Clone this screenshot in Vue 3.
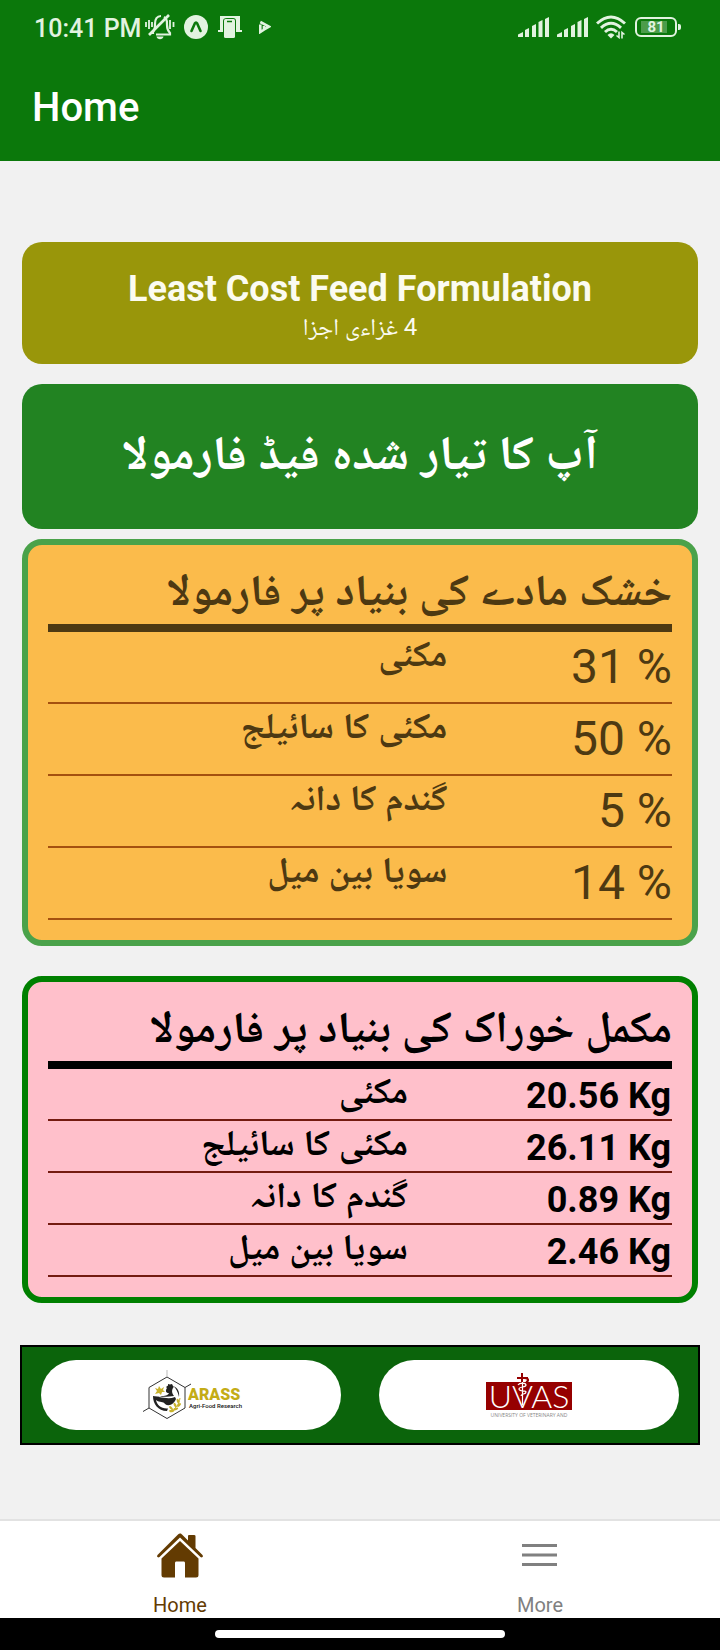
<script setup>
const dryMatter = [
  { name: 'مکئی', amount: '31 %' },
  { name: 'مکئی کا سائیلج', amount: '50 %' },
  { name: 'گندم کا دانہ', amount: '5 %' },
  { name: 'سویا بین میل', amount: '14 %' },
]
const asFed = [
  { name: 'مکئی', amount: '20.56 Kg' },
  { name: 'مکئی کا سائیلج', amount: '26.11 Kg' },
  { name: 'گندم کا دانہ', amount: '0.89 Kg' },
  { name: 'سویا بین میل', amount: '2.46 Kg' },
]
</script>

<template>
  <div class="screen">
    <header class="top">
      <div class="status">
        <div class="group">
          <span class="clock">10:41 PM</span>
          <svg class="bell" width="30" height="28" viewBox="0 0 30 28" fill="none" stroke="currentColor" stroke-width="2.200">
            <path d="M8 21 V19 C10 17 10 15 10 11 C10 6 12 3 16 3 M19 4 C22 6 22 8 22 12 C22 16 23 18 25 20 V21.500 H11" />
            <path d="M24 2 L4 22" stroke-width="2.600" />
            <path d="M1 9 V14 M4 7 V16 M7 9 V14 M25 7 V16 M28.500 9 V14 M22 8 V13" stroke-width="1.800" />
            <path d="M11.500 23.500 H18.500 C18 27 12 27 11.500 23.500Z" fill="currentColor" stroke="none" />
          </svg>
          <svg class="expo" width="24" height="24" viewBox="0 0 24 24">
            <circle cx="12" cy="12" r="12" fill="currentColor" />
            <path d="M7.500 16 L10.800 8.500 Q12 6.500 13.200 8.500 L16.500 16" fill="none" stroke="#0b780b" stroke-width="2.600" stroke-linecap="round" />
          </svg>
          <svg class="cast" width="24" height="22" viewBox="0 0 24 22">
            <path d="M2 0 H22 V14 H24 V16 H18 V5 Q18 2 15 2 H9 Q5 2 5 5 V16 H0 V14 H2 Z" fill="currentColor" />
            <rect x="6" y="3" width="11" height="19" rx="1.500" fill="currentColor" />
            <path d="M9 5.500 H14" stroke="#0b780b" stroke-width="1.500" />
          </svg>
          <svg class="play" width="12" height="14" viewBox="0 0 12 14" fill="none" stroke="currentColor" stroke-width="2.600">
            <path d="M1.300 2 L10 6.700 L5 9.500 V6 M1.300 4.500 V12 L6 9" />
          </svg>
        </div>
        <div class="group">
          <svg v-for="n in 2" :key="n" class="signal" width="31" height="20" viewBox="0 0 31 20" fill="currentColor">
            <path d="M0 20 V17.500 L5 15 V20Z M7 20 V13 L11 11 V20Z M14 20 V9 L18 7 V20Z M20.500 20 V5 L24.500 3 V20Z M27 20 V2 L31 0 V20Z" />
          </svg>
          <svg class="wifi" width="30" height="24" viewBox="0 0 30 24" fill="none" stroke="currentColor" stroke-width="3">
            <path d="M1 8.500 Q15 -4.500 29 8.500" />
            <path d="M5 12.800 Q15 3.800 25 12.800" />
            <path d="M9 17 Q15 11.500 21 17" />
            <path d="M11.500 20 Q15 16.500 18.500 20 L15 23.500Z" fill="currentColor" stroke="none" />
            <path d="M23 16.500 V22.500 L20.500 20.500 M26 23.500 V17.500 L28.500 19.500" stroke-width="1.600" />
          </svg>
          <span class="battery"><span class="cell">81</span></span>
        </div>
      </div>
      <h1 class="title">Home</h1>
    </header>

    <main class="content">
      <section class="card olive">
        <h2>Least Cost Feed Formulation</h2>
        <p dir="rtl">4 غزاءی اجزا</p>
      </section>

      <section class="card banner" dir="rtl">
        <h2>آپ کا تیار شدہ فیڈ فارمولا</h2>
      </section>

      <section class="card panel dry" dir="rtl">
        <h3>خشک مادے کی بنیاد پر فارمولا</h3>
        <table>
          <tbody>
            <tr v-for="row in dryMatter" :key="row.name">
              <td class="amount"><bdi dir="ltr">{{ row.amount }}</bdi></td>
              <th scope="row">{{ row.name }}</th>
            </tr>
          </tbody>
        </table>
      </section>

      <section class="card panel fed" dir="rtl">
        <h3>مکمل خوراک کی بنیاد پر فارمولا</h3>
        <table>
          <tbody>
            <tr v-for="row in asFed" :key="row.name">
              <td class="amount"><bdi dir="ltr">{{ row.amount }}</bdi></td>
              <th scope="row">{{ row.name }}</th>
            </tr>
          </tbody>
        </table>
      </section>

      <section class="sponsors">
        <div class="pill">
          <svg width="104" height="50" viewBox="-4 0 104 50" role="img" aria-label="ARASS Agri-Food Research">
            <g fill="none" stroke="#333" stroke-width="1">
              <path d="M24 7 L42 17.500 V38 L24 48.500 L6 38 V17.500Z" />
              <path d="M42 17.500 L48 14 M6 38 L0 41.500" />
              <path d="M24 0 V7" stroke="#bbb" />
            </g>
            <path d="M10 26 C10 34 15 41 24 41 L25 38.500 C18 39 14 35 13 30 C17 33 20 31 22 34 C26 37 31 34 33 29 L32 27 C27 29 22 28 16 27 C20 25 24 27 26 23 C23 23 22 21 24 18 L23 17 L25 15.500 L25 14 L27 14.500 L29 14 L30 16 C33 18 35 22 36 27 C37 22 34 17 31 16.500 C29 19 28 22 31 26 C26 27 14 27 10 26Z" fill="#222" />
            <path d="M12 18 L15 19 L16 16 L18 19 L21 17 L20 20 L22 22 L19 22 L18 25 L16 23 L12 24 L14 21Z" fill="#c9b32c" />
            <path d="M26 41 C32 40 36 35 37 28" fill="none" stroke="#c9b32c" stroke-width="1" />
            <g fill="#c9b32c">
              <ellipse cx="35" cy="31" rx="1.200" ry="2.400" transform="rotate(-20 35 31)" />
              <ellipse cx="32" cy="35" rx="1.200" ry="2.400" transform="rotate(-25 32 35)" />
              <ellipse cx="28" cy="38" rx="1.200" ry="2.400" transform="rotate(-45 28 38)" />
              <ellipse cx="36" cy="35" rx="1.200" ry="2.400" transform="rotate(50 36 35)" />
              <ellipse cx="33" cy="39" rx="1.200" ry="2.400" transform="rotate(65 33 39)" />
              <ellipse cx="29" cy="41" rx="1.200" ry="2.400" transform="rotate(80 29 41)" />
            </g>
            <text x="45" y="30" class="arass">ARASS</text>
            <text x="46" y="38" class="agri">Agri-Food Research</text>
          </svg>
        </div>
        <div class="pill">
          <svg width="90" height="50" viewBox="-2 0 90 50" role="img" aria-label="UVAS University of Veterinary and">
            <rect x="0" y="12" width="86" height="28" fill="#960000" />
            <path d="M36 3 V12 M31 8 H42 M38 8 C43 8 43 11 40 12" fill="none" stroke="#960000" stroke-width="2" />
            <text x="43" y="38" class="uvas">UVAS</text>
            <path d="M36.500 12 V35 M32 15 C34 12 40 13 40 15 C40 18 33 16 33 19 C33 22 40 20 40 22 C40 25 35 23 35 26" fill="none" stroke="#fff" stroke-width="1.200" />
            <text x="43" y="47" class="univ">UNIVERSITY OF VETERINARY AND</text>
          </svg>
        </div>
      </section>
    </main>

    <nav class="tabs">
      <a class="tab active" href="#home">
        <svg width="48" height="46" viewBox="0 0 48 46" fill="currentColor">
          <path d="M24 0.500 C25 0.500 25.500 1 26 1.500 L32 7.500 V3 Q32 2 33 2 H38 Q39.500 2 39.500 3 V15 L46.500 22 Q47.500 23.500 46.500 24 Q45.500 24.800 44.500 24 L24 4.500 L3.500 24 Q2.500 24.800 1.500 24 Q0.500 23.500 1.500 22 L22 1.500 Q23 0.500 24 0.500Z" />
          <path d="M24 8 L42.500 25.500 V42 Q42.500 44.500 40 44.500 H29 V30 Q29 28.500 28 28.500 H20 Q19 28.500 19 30 V44.500 H8 Q5.500 44.500 5.500 42 V25.500Z" />
        </svg>
        <span>Home</span>
      </a>
      <a class="tab" href="#more">
        <svg width="36" height="46" viewBox="0 0 36 46" fill="currentColor">
          <path d="M0 11 H35 V14 H0Z M0 20.500 H35 V23.500 H0Z M0 30 H35 V33 H0Z" />
        </svg>
        <span>More</span>
      </a>
    </nav>
    <div class="gesture"><span></span></div>
  </div>
</template>

<style>
body {
  margin: 0;
  background: #f1f1f1;
}
</style>

<style scoped>
.screen {
  display: flex;
  flex-direction: column;
  min-height: 100vh;
  font-family: Roboto, "Noto Naskh Arabic", "Noto Sans Arabic", "DejaVu Sans", sans-serif;
  background: #f1f1f1;
}
h1, h2, h3, p {
  margin: 0;
}
.top {
  height: 161px;
  background: #0b780b;
  color: #fff;
}
.status {
  display: flex;
  justify-content: space-between;
  height: 54px;
  padding: 0 38px 0 34px;
  color: #e2f3e0;
}
.group {
  display: flex;
  align-items: center;
}
.clock {
  font-size: 25px;
  font-weight: 500;
  line-height: 54px;
  padding-top: 3px;
}
.bell { margin-left: 4px; }
.expo { margin-left: 9px; }
.cast { margin-left: 10px; }
.play { margin-left: 17px; }
.signal { margin-right: 8px; }
.wifi { margin-right: 9px; }
.battery {
  position: relative;
  box-sizing: border-box;
  width: 42px;
  height: 20px;
  margin-right: 5px;
  padding: 2px 8px 2px 4px;
  border: 2px solid currentColor;
  border-radius: 6px;
}
.battery::after {
  content: "";
  position: absolute;
  right: -6px;
  top: 5px;
  width: 3px;
  height: 6px;
  border-radius: 0 2px 2px 0;
  background: currentColor;
}
.cell {
  display: block;
  height: 12px;
  padding-left: 4px;
  background: #4c9c4b;
  font-size: 15px;
  font-weight: 700;
  line-height: 12px;
  text-align: center;
}
.title {
  padding-left: 32px;
  font-size: 40px;
  font-weight: 500;
  line-height: 108px;
}
.content {
  flex: 1;
  padding: 81px 20px 0;
}
.card {
  margin: 0 2px;
  border-radius: 20px;
}
.olive {
  box-sizing: border-box;
  min-height: 122px;
  padding-top: 24px;
  background: #99960a;
  color: #fbfbf0;
  text-align: center;
}
.olive h2 {
  font-size: 36px;
  font-weight: 700;
  line-height: 46px;
}
.olive p {
  font-size: 24px;
  line-height: 30px;
}
.banner {
  margin-top: 20px;
  padding-bottom: 7px;
  background: #228322;
  color: #fff;
  text-align: center;
}
.banner h2 {
  font-size: 48px;
  font-weight: 700;
  line-height: 138px;
}
.panel {
  padding: 20px;
  border: 6px solid;
}
.panel h3 {
  height: 59px;
  border-bottom: 8px solid;
  font-size: 44px;
  font-weight: 700;
  line-height: 50px;
  white-space: nowrap;
}
.dry {
  margin-top: 10px;
  border-color: #4aa24a;
  background: #fbbb4b;
  color: #4d3912;
}
.fed {
  margin-top: 30px;
  border-color: #008000;
  background: #ffc0cb;
  color: #000;
}
table {
  width: 100%;
  border-spacing: 0;
  table-layout: fixed;
}
td, th {
  box-sizing: border-box;
  padding: 0;
  border-bottom: 2px solid #741b10;
  text-align: right;
  white-space: nowrap;
}
th {
  font-size: 36px;
  font-weight: 700;
  line-height: 44px;
  vertical-align: top;
}
.dry td, .dry th {
  height: 72px;
  border-color: #a4500f;
}
.dry .amount {
  width: 36%;
  padding-bottom: 2px;
  font-size: 48px;
}
.fed td, .fed th {
  height: 52px;
}
.fed .amount {
  width: 264px;
  padding-top: 4px;
  padding-right: 1px;
  font-size: 36px;
  font-weight: 700;
  line-height: 46px;
}
.sponsors {
  display: flex;
  justify-content: space-between;
  gap: 38px;
  margin-top: 42px;
  padding: 13px 19px;
  border: 2px solid #000;
  background: #0b640b;
}
.pill {
  display: flex;
  flex: 1;
  align-items: center;
  justify-content: center;
  height: 70px;
  border-radius: 35px;
  background: #fff;
}
.arass {
  font-family: Roboto, sans-serif;
  font-size: 16px;
  font-weight: 900;
  fill: #c4ac16;
}
.agri {
  font-family: Roboto, sans-serif;
  font-size: 6px;
  font-weight: 500;
  fill: #111;
}
.uvas {
  font-family: Lato, sans-serif;
  font-size: 32px;
  font-weight: 300;
  text-anchor: middle;
  fill: #fff;
}
.univ {
  font-family: "Open Sans", sans-serif;
  font-size: 5px;
  text-anchor: middle;
  fill: #888;
}
.tabs {
  display: flex;
  height: 97px;
  border-top: 2px solid #e2e2e2;
  background: #fff;
}
.tab {
  display: flex;
  flex: 1;
  flex-direction: column;
  align-items: center;
  padding-top: 12px;
  color: #808080;
  font-size: 20px;
  line-height: 24px;
  text-decoration: none;
}
.tab svg {
  margin-bottom: 14px;
}
.active {
  color: #633b02;
}
.gesture {
  display: flex;
  align-items: center;
  justify-content: center;
  height: 32px;
  background: #000;
}
.gesture span {
  width: 290px;
  height: 8px;
  border-radius: 4px;
  background: #fff;
}
</style>
